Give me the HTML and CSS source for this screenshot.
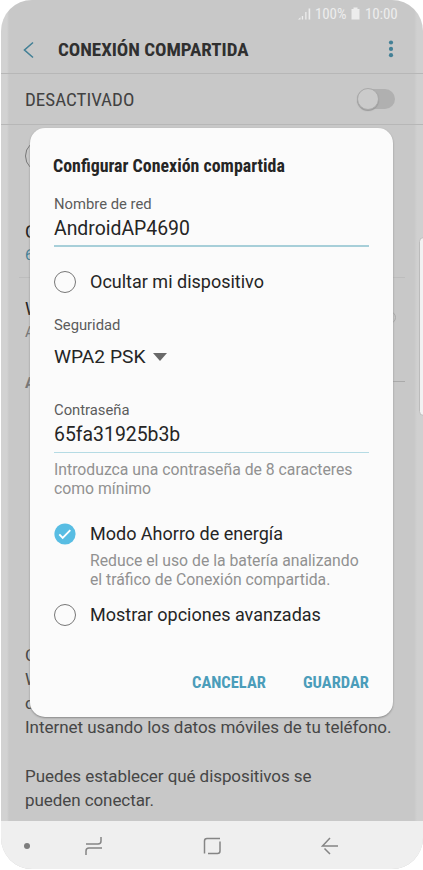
FILE: index.html
```html
<!DOCTYPE html>
<html lang="es">
<head>
<meta charset="utf-8">
<title>Conexión compartida</title>
<link rel="stylesheet" href="styles.css">
</head>
<body>
<main class="screen">
  <div class="statusbar">
    <svg class="signal" width="13" height="12" viewBox="0 0 13 12"><path d="M0 11.500l2.500-2.300v2.300zM3.800 8h1.300v3.500H3.800zM7.200 4h1.300v7.500H7.200zM10.600 0.500h1.600v11h-1.600z"/></svg>
    <span class="percent condensed">100%</span>
    <svg class="battery" width="9" height="13" viewBox="0 0 9 13"><path d="M2.500 0.500h4V2H8.500v10.500H.5V2h2z"/></svg>
    <span class="clock condensed">10:00</span>
  </div>
  <header class="appbar">
    <svg class="back" width="12" height="18" viewBox="0 0 12 18"><path d="M10 1.500L1.500 9l8.500 7.500"/></svg>
    <h1 class="heading condensed">CONEXIÓN COMPARTIDA</h1>
    <svg class="more" width="6" height="18" viewBox="0 0 6 18"><circle cx="3" cy="2.500" r="2.100"/><circle cx="3" cy="8.900" r="2.100"/><circle cx="3" cy="15.200" r="2.100"/></svg>
  </header>
  <div class="switchbar"><span class="state condensed">DESACTIVADO</span><span class="switch"><i class="knob"></i></span></div>
  <section class="content">
    <div class="intro"><i class="ring"></i></div>
    <div class="entry network"><b class="name">C</b><span class="value">6</span></div>
    <div class="entry wifi"><div class="lines"><b class="name">W</b><span class="note">A</span></div><i class="info"></i></div>
    <div class="group"><span class="group-name">A</span><i class="rule"></i></div>
    <div class="card"></div>
    <p class="help">C<br>W<br>c<br><span>Internet usando los datos móviles de tu teléfono.</span></p>
    <p class="help second"><span>Puedes establecer qué dispositivos se</span><br><span>pueden conectar.</span></p>
  </section>
  <nav class="navbar">
    <i class="dot"></i>
    <svg class="recents" width="18" height="20" viewBox="0 0 18 20"><path d="M1 8h12q3 0 3-3V1M17 12H4q-3 0-3 3v4"/></svg>
    <svg class="home" width="19" height="18" viewBox="0 0 19 18"><path d="M1.500 16.500V4q0-2.500 2.500-2.500h13M17 4.500V14q0 2.500-2.500 2.500H5"/></svg>
    <svg class="return" width="18" height="18" viewBox="0 0 18 18"><path d="M9 1L1.500 8.900H17M3.500 11.500l5.500 5.500"/></svg>
  </nav>
  <i class="edge-handle"></i>
  <section class="dialog">
    <h2 class="title condensed">Configurar Conexión compartida</h2>
    <div class="label t1">Nombre de red</div>
    <div class="field f1">AndroidAP4690</div>
    <div class="option hide"><i class="radio"></i><span>Ocultar mi dispositivo</span></div>
    <div class="label t2">Seguridad</div>
    <div class="select">WPA2 PSK<i class="caret"></i></div>
    <div class="label t3">Contraseña</div>
    <div class="field f2">65fa31925b3b</div>
    <p class="hint"><span>Introduzca una contraseña de 8 caracteres</span><br><span>como mínimo</span></p>
    <div class="option saver"><svg class="check" width="22" height="22" viewBox="0 0 22 22"><circle cx="11" cy="11" r="10.600"/><path d="M5.300 11.300l3.400 3.500 7.600-7.600"/></svg><span>Modo Ahorro de energía</span></div>
    <p class="hint detail"><span>Reduce el uso de la batería analizando</span><br><span>el tráfico de Conexión compartida.</span></p>
    <div class="option advanced"><i class="radio"></i><span>Mostrar opciones avanzadas</span></div>
    <div class="actions"><span class="cancel condensed">CANCELAR</span><span class="save condensed">GUARDAR</span></div>
  </section>
</main>
</body>
</html>
```
FILE: styles.css
```css
* { box-sizing: border-box; }
body { margin: 0; background: #fff; font-family: Roboto, sans-serif; }
h1, h2, p { margin: 0; font-weight: 400; }
i { display: block; font-style: normal; flex: none; }
svg { display: block; flex: none; }
span { white-space: nowrap; }
.condensed { font-family: "Roboto Condensed", Roboto, sans-serif; font-stretch: 75%; white-space: nowrap; }
.screen { position: relative; width: 422px; height: 869px; margin-left: 1px; border-radius: 31px; overflow: hidden; display: flex; flex-direction: column; background: linear-gradient(90deg, #d2d2d2 0 6px, #c8c8c8 8px 413px, #d0d0d0 416px); }
.statusbar { height: 27px; display: flex; align-items: center; padding-left: 297px; color: #ededed; fill: #ededed; font-size: 15px; }
.percent { width: 32px; margin-left: 4px; letter-spacing: -.1px; }
.battery { margin-left: 4px; }
.clock { margin-left: 5px; letter-spacing: -.1px; }
.appbar { height: 47px; display: flex; align-items: center; padding-left: 22px; border-bottom: 1px solid #b7b7b7; }
.back { stroke: #438096; stroke-width: 1.600; fill: none; }
.heading { width: 300px; margin-left: 23px; margin-top: -1px; font-size: 19px; font-weight: 700; color: #303030; letter-spacing: -.03px; }
.more { margin-left: 30px; margin-top: -2px; fill: #438096; }
.switchbar { height: 50.500px; display: flex; align-items: center; padding-left: 24px; border-bottom: 1.500px solid #b7b7b7; }
.state { width: 332px; margin-top: 1px; font-size: 19px; color: #424242; }
.switch { width: 38px; height: 20px; border-radius: 11px; background: #b0b0b0; }
.knob { width: 22px; height: 22px; margin-top: -1px; border-radius: 50%; background: #cbcbcb; border: 1px solid #aaa; box-shadow: 0 1px 1px #999; }
.content { flex: 1; padding-left: 24px; color: #464646; }
.intro { height: 95px; padding-top: 15px; }
.ring { width: 32px; height: 32px; border: 1px solid #777; border-radius: 50%; }
.entry { font-size: 18px; line-height: 24px; }
.name { display: block; font-weight: 400; color: #222; }
.value, .note { display: block; font-size: 15px; color: #438096; line-height: 22px; }
.network { height: 58px; width: 386px; margin-left: -6px; padding-left: 6px; border-bottom: 1px solid #bdbdbd; }
.wifi { display: flex; justify-content: space-between; width: 371px; height: 90px; padding-top: 19px; }
.note { color: #777; }
.info { width: 13px; height: 13px; margin-top: 14px; border: 1px solid #aaa; border-radius: 50%; }
.group { height: 30px; display: flex; align-items: center; font-size: 15px; color: #777; }
.group-name { width: 30px; font-weight: 700; }
.rule { width: 350px; height: 1px; margin-top: -2px; background: #aaa; }
.card { height: 245px; }
.help { font-size: 17px; letter-spacing: -.04px; line-height: 24.300px; }
.second { margin-top: 24px; letter-spacing: -.07px; }
.navbar { height: 48px; display: flex; align-items: center; background: #efefef; padding-left: 23px; fill: none; stroke: #858585; stroke-width: 1.500; }
.dot { width: 6px; height: 6px; margin-top: 1px; border-radius: 50%; background: #7d7d7d; }
.recents { margin-left: 55px; margin-top: 1px; }
.home { margin-left: 100px; margin-top: 1px; }
.return { margin-left: 99px; margin-top: 1px; }
.edge-handle { position: absolute; right: -5px; top: 237px; width: 9px; height: 179px; border: 1px solid #bbb; border-radius: 6px; background: #f2f2f2; }
.dialog { position: absolute; left: 29px; top: 128px; width: 363px; height: 589px; border-radius: 15px; padding: 26px 24px 0; background: #fbfbfb; box-shadow: 0 1px 2px #888; color: #252525; font-size: 18px; line-height: 24px; }
.title { height: 24px; font-size: 17.900px; line-height: 24px; font-weight: 700; margin-left: -1px; }
.label { height: 20px; line-height: 20px; font-size: 14.800px; color: #5c5c5c; }
.t1 { margin-top: 16px; }
.field { margin-top: 2px; height: 31px; border-bottom: 2px solid #a7cfd9; width: 315px; font-size: 19.400px; line-height: 25px; }
.option { height: 24px; display: flex; align-items: center; }
.option span { margin-left: 14px; }
.radio { width: 22px; height: 22px; border: 1.500px solid #777; border-radius: 50%; }
.hide { margin-top: 23px; }
.t2 { margin-top: 21px; }
.select { height: 24px; margin-top: 10px; display: flex; align-items: center; font-size: 19.200px; }
.caret { margin-left: 8px; border: 7px solid transparent; border-top: 8px solid #696969; border-bottom: 0; }
.t3 { margin-top: 31px; }
.f2 { border-bottom: 1.500px solid #b5dbe4; }
.hint { margin-top: 8px; height: 38px; line-height: 18.800px; font-size: 15.770px; color: #919191; }
.saver { margin-top: 23px; }
.check { fill: #58bde3; }
.check path { fill: none; stroke: #fff; stroke-width: 1.900; }
.detail { margin-top: 6px; padding-left: 36px; }
.advanced { margin-top: 13px; }
.actions { height: 24px; margin-top: 44px; display: flex; padding-left: 138px; font-size: 16.500px; font-weight: 700; color: #4b9dba; }
.save { margin-left: 37px; }
```
